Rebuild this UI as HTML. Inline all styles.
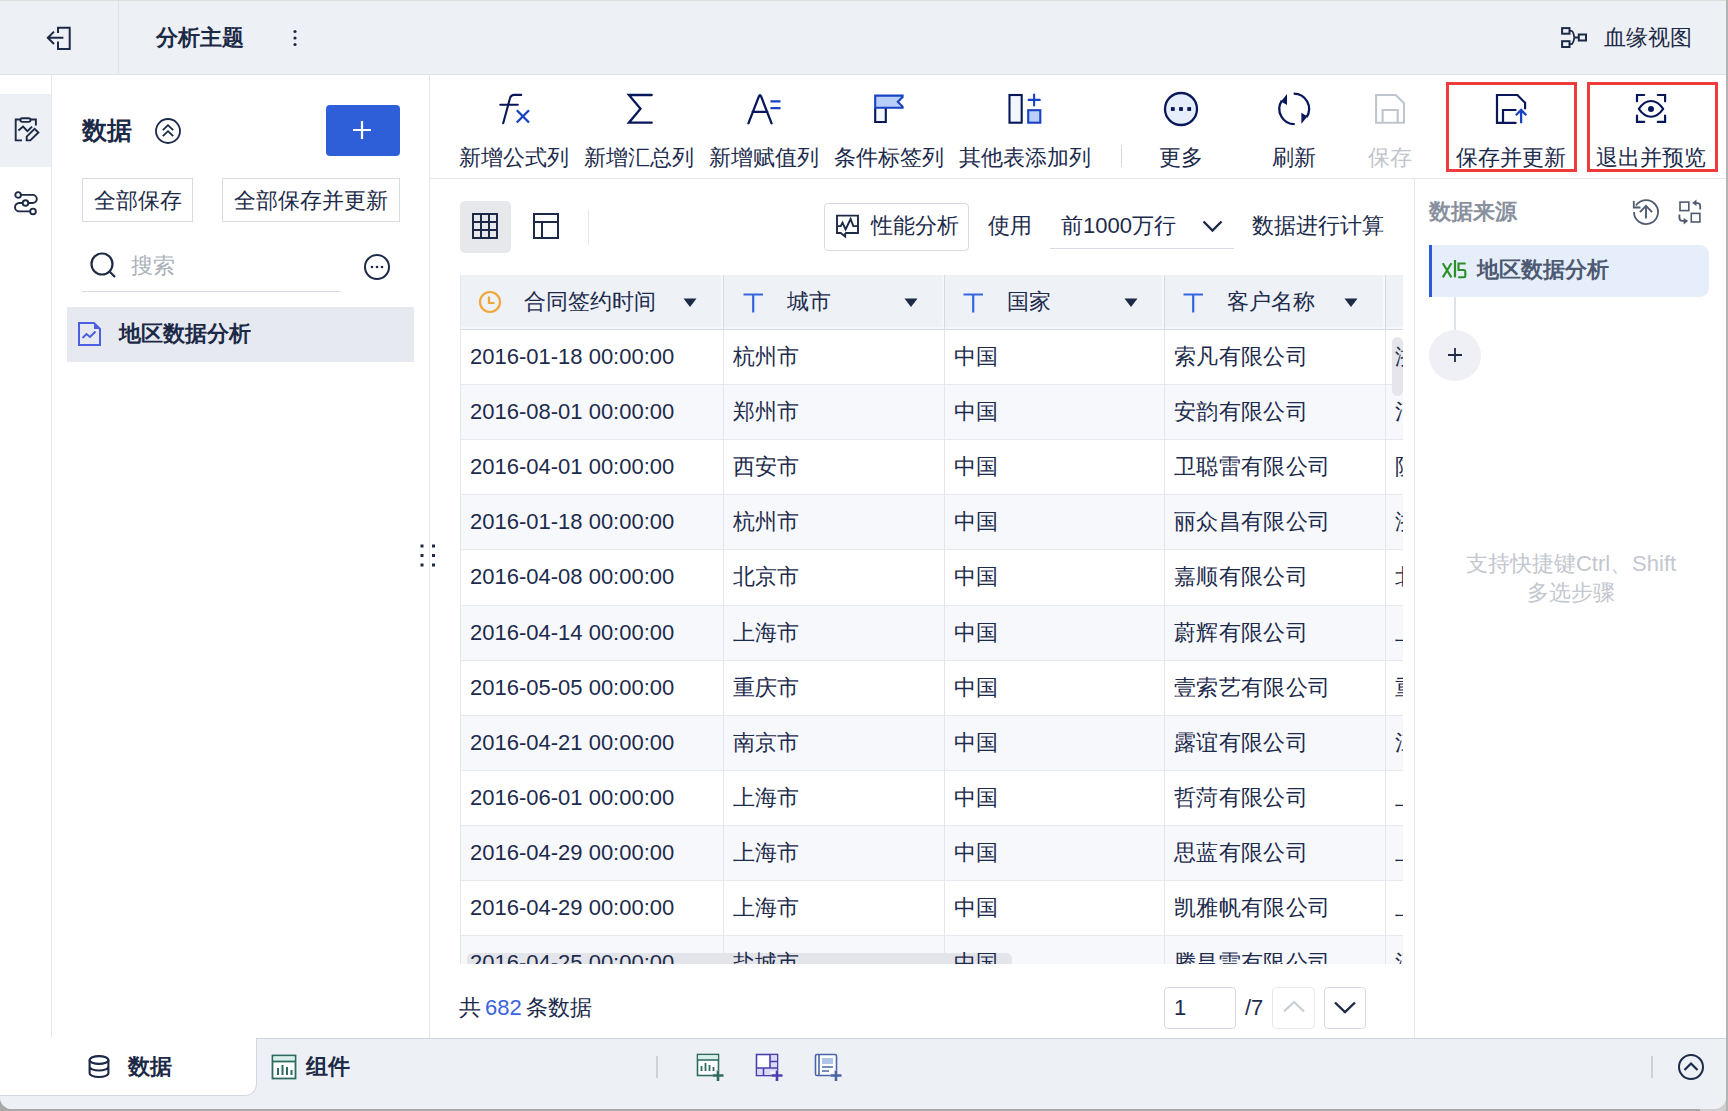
<!DOCTYPE html>
<html><head><meta charset="utf-8"><style>
html,body{margin:0;padding:0}
body{width:1728px;height:1111px;overflow:hidden;position:relative;background:#a8a8a8;font-family:"Liberation Sans",sans-serif}
#win{position:absolute;left:0;top:0;width:1726px;height:1109px;overflow:hidden;border-radius:0 0 12px 12px;background:#edf0f5}
.b{position:absolute}
.t{position:absolute;white-space:nowrap;line-height:26px}
#rc{position:absolute;left:1700px;top:1090px;width:28px;height:21px;background:#cfcfcf}
#rs{position:absolute;left:1726px;top:0;width:2px;height:1111px;background:#b4b4b4}
</style></head><body>
<div id="rc"></div><div id="rs"></div>
<div id="win">
<div class="b" style="left:0px;top:0px;width:1728px;height:1px;background:#dcdedc"></div>
<div class="b" style="left:0px;top:1px;width:1726px;height:73px;background:#edf0f5"></div>
<div class="b" style="left:0px;top:74px;width:1726px;height:1px;background:#dde1e8"></div>
<div class="b" style="left:118px;top:1px;width:1px;height:73px;background:#dde1e8"></div>
<svg class="b" style="left:44px;top:24px" width="30" height="30" viewBox="0 0 30 30" fill="none"><path d="M14 9V3.8H25.7V25H14V17.6" stroke="#1c2a47" stroke-width="2"/><path d="M19.4 13.8H4.2M10 7.6L3.8 13.8L10 20" stroke="#1c2a47" stroke-width="2"/></svg>
<div class="t" style="left:156px;top:25px;font-size:22px;color:#1c2a47;font-weight:bold;">分析主题</div>
<svg class="b" style="left:290px;top:28px" width="10" height="20" viewBox="0 0 10 20" fill="none"><circle cx="5" cy="3.5" r="1.6" fill="#1c2a47"/><circle cx="5" cy="10" r="1.6" fill="#1c2a47"/><circle cx="5" cy="16.5" r="1.6" fill="#1c2a47"/></svg>
<svg class="b" style="left:1558px;top:24px" width="32" height="26" viewBox="0 0 32 26" fill="none"><rect x="4.1" y="4.1" width="7.4" height="5.6" stroke="#1c2a47" stroke-width="2"/><rect x="4.1" y="17.2" width="7.4" height="5.8" stroke="#1c2a47" stroke-width="2"/><rect x="20.8" y="10.5" width="7.2" height="6" stroke="#1c2a47" stroke-width="2"/><path d="M11.5 6.9H13.3C14.8 6.9 15.4 8.2 16.4 13.5C15.4 18.8 14.8 20.1 13.3 20.1H11.5M16.4 13.5H20.8" stroke="#1c2a47" stroke-width="1.8"/></svg>
<div class="t" style="left:1604px;top:25px;font-size:22px;color:#1c2a47;font-weight:normal;">血缘视图</div>
<div class="b" style="left:0px;top:75px;width:51px;height:963px;background:#fff"></div>
<div class="b" style="left:51px;top:75px;width:1px;height:962px;background:#e3e6ec"></div>
<div class="b" style="left:0px;top:94px;width:51px;height:73px;background:#edf0f5"></div>
<svg class="b" style="left:12px;top:115px" width="30" height="30" viewBox="0 0 30 30" fill="none"><path d="M10 25.4H3.7V4.5H8.4M18.5 4.5H23.9V10.5" stroke="#1c2a47" stroke-width="1.9"/><rect x="8.4" y="3.3" width="10.1" height="3.6" rx="1.8" stroke="#1c2a47" stroke-width="1.9"/><path d="M6.4 15.5L11.1 11.6L15.4 16.2L20.1 11.6" stroke="#1c2a47" stroke-width="1.9"/><path d="M14.7 21.6L22.6 13.9L26.4 17.5L18.3 25.4H14.7Z" stroke="#1c2a47" stroke-width="1.9"/></svg>
<svg class="b" style="left:12px;top:189px" width="28" height="28" viewBox="0 0 28 28" fill="none"><circle cx="6.1" cy="5.9" r="2.8" stroke="#1c2a47" stroke-width="1.9"/><circle cx="13.5" cy="14" r="2.8" stroke="#1c2a47" stroke-width="1.9"/><circle cx="21" cy="22.4" r="2.8" stroke="#1c2a47" stroke-width="1.9"/><path d="M8.9 5.9H20.5C22.9 5.9 24.8 7.8 24.8 10C24.8 12.2 22.9 14 20.5 14H16.3M10.7 14H7.2C4.9 14 3 15.9 3 18.2C3 20.5 4.9 22.4 7.2 22.4H18.2" stroke="#1c2a47" stroke-width="1.9"/></svg>
<div class="b" style="left:52px;top:75px;width:377px;height:963px;background:#fff"></div>
<div class="b" style="left:429px;top:75px;width:1px;height:963px;background:#e3e6ec"></div>
<div class="t" style="left:82px;top:117px;font-size:25px;color:#1c2a47;font-weight:bold;">数据</div>
<svg class="b" style="left:154px;top:117px" width="28" height="28" viewBox="0 0 28 28" fill="none"><circle cx="14" cy="14" r="12" stroke="#1c2a47" stroke-width="1.8"/><path d="M8.8 13.2L14 8.2L19.2 13.2M8.8 19.2L14 14.2L19.2 19.2" stroke="#1c2a47" stroke-width="1.8"/></svg>
<div class="b" style="left:326px;top:105px;width:74px;height:51px;background:#2e5fd8;border-radius:4px"></div>
<svg class="b" style="left:352px;top:120px" width="20" height="20" viewBox="0 0 20 20" fill="none"><path d="M10 1V19M1 10H19" stroke="#fff" stroke-width="2.2"/></svg>
<div class="b" style="left:82px;top:178px;width:111px;height:44px;border:1px solid #d6dae2;box-sizing:border-box;background:#fff"></div>
<div class="t" style="left:94px;top:188px;font-size:22px;color:#1c2a47;font-weight:normal;">全部保存</div>
<div class="b" style="left:222px;top:178px;width:178px;height:44px;border:1px solid #d6dae2;box-sizing:border-box;background:#fff"></div>
<div class="t" style="left:234px;top:188px;font-size:22px;color:#1c2a47;font-weight:normal;">全部保存并更新</div>
<svg class="b" style="left:89px;top:251px" width="30" height="30" viewBox="0 0 30 30" fill="none"><circle cx="13" cy="13" r="10.5" stroke="#1c2a47" stroke-width="2.2"/><path d="M20.5 20.5L26 26" stroke="#1c2a47" stroke-width="2.2"/></svg>
<div class="t" style="left:131px;top:253px;font-size:22px;color:#abb0b9;font-weight:normal;">搜索</div>
<div class="b" style="left:82px;top:291px;width:259px;height:1px;background:#d8dce4"></div>
<svg class="b" style="left:363px;top:253px" width="28" height="28" viewBox="0 0 28 28" fill="none"><circle cx="14" cy="14" r="12" stroke="#1c2a47" stroke-width="2"/><circle cx="9" cy="14" r="1.3" fill="#1c2a47"/><circle cx="14" cy="14" r="1.3" fill="#1c2a47"/><circle cx="19" cy="14" r="1.3" fill="#1c2a47"/></svg>
<div class="b" style="left:67px;top:307px;width:347px;height:55px;background:#e6e9f0"></div>
<svg class="b" style="left:76px;top:320px" width="26" height="28" viewBox="0 0 26 28" fill="none"><path d="M3 3H18L24 9V25H3Z" stroke="#4b5fe0" stroke-width="2"/><path d="M18 3V9H24Z" fill="#4b5fe0"/><path d="M6.5 18L10.5 14L14 17L19.5 11.5" stroke="#4b5fe0" stroke-width="2"/></svg>
<div class="t" style="left:119px;top:321px;font-size:22px;color:#1c2a47;font-weight:bold;">地区数据分析</div>
<div class="b" style="left:430px;top:75px;width:1296px;height:103px;background:#fff"></div>
<div class="b" style="left:430px;top:178px;width:1296px;height:1px;background:#e3e6ec"></div>
<svg class="b" style="left:496px;top:90px" width="40" height="38" viewBox="0 0 40 38" fill="none"><path d="M25.2 4.9H18.3C15.6 4.9 14.4 6.5 13.9 8.6L7.2 33.3" stroke="#08175a" stroke-width="2.1" stroke-linecap="round"/><path d="M4.3 14.8H21.8" stroke="#08175a" stroke-width="2.1" stroke-linecap="round"/><path d="M20.8 20.3L33 32.5M33 20.3L20.8 32.5" stroke="#1842c4" stroke-width="2.3"/></svg>
<svg class="b" style="left:624px;top:90px" width="34" height="38" viewBox="0 0 34 38" fill="none"><path d="M27.7 5H4.9L16.5 18.8L4.9 32.7H27.7" stroke="#08175a" stroke-width="2.3" stroke-linecap="round" stroke-linejoin="miter"/></svg>
<svg class="b" style="left:744px;top:90px" width="42" height="38" viewBox="0 0 42 38" fill="none"><path d="M4.4 33.3L15 6.2Q16 4.2 17 6.2L27.6 33.3M8.6 21.8H23.4" stroke="#08175a" stroke-width="2.3" stroke-linecap="round"/><path d="M26.5 11.3H36.5M26.5 18.2H36.5" stroke="#1842c4" stroke-width="2.3"/></svg>
<svg class="b" style="left:872px;top:91px" width="34" height="36" viewBox="0 0 34 36" fill="none"><path d="M3.2 16.8V31H13.8V16.8" stroke="#08175a" stroke-width="2.1" fill="#f2f7fd"/><path d="M3.2 4.6H30.6V6L25.8 10.8L30.6 15.6V16.8H3.2Z" stroke="#1842c4" stroke-width="2.1" fill="#b8cffb"/></svg>
<svg class="b" style="left:1006px;top:91px" width="40" height="36" viewBox="0 0 40 36" fill="none"><rect x="3.5" y="4" width="12.2" height="27.7" stroke="#08175a" stroke-width="2.1" fill="#f2f7fd"/><rect x="22.2" y="19.2" width="12.1" height="12.5" stroke="#1842c4" stroke-width="2.1" fill="#b8cffb"/><path d="M28.1 3.6V14.4M22.6 8.9H33.8" stroke="#1842c4" stroke-width="2.1" stroke-linecap="round"/></svg>
<svg class="b" style="left:1161px;top:90px" width="40" height="40" viewBox="0 0 40 40" fill="none"><circle cx="20" cy="19" r="16" stroke="#08175a" stroke-width="2.3" fill="#e6eefc"/><rect x="9.9" y="17.1" width="3.8" height="3.8" fill="#08175a"/><rect x="18.1" y="17.1" width="3.8" height="3.8" fill="#08175a"/><rect x="26.3" y="17.1" width="3.8" height="3.8" fill="#08175a"/></svg>
<svg class="b" style="left:1274px;top:89px" width="40" height="40" viewBox="0 0 40 40" fill="none"><path d="M19.7 4.6A15.3 15.3 0 0 1 32.6 28.2" stroke="#08175a" stroke-width="2.3"/><path d="M27.4 23.8L27.4 34.8L33.4 27.4Z" fill="#08175a"/><path d="M20.7 35.2A15.3 15.3 0 0 1 7.8 11.6" stroke="#08175a" stroke-width="2.3"/><path d="M13 16L13 5L7 12.4Z" fill="#08175a"/></svg>
<svg class="b" style="left:1372px;top:91px" width="38" height="36" viewBox="0 0 38 36" fill="none"><path d="M4.1 4H23.7L32 12.3V31.7H4.1Z" stroke="#bfc5ce" stroke-width="2.1"/><path d="M10.6 31.7V19H25.7V31.7" stroke="#bfc5ce" stroke-width="2.1"/></svg>
<svg class="b" style="left:1493px;top:91px" width="38" height="36" viewBox="0 0 38 36" fill="none"><path d="M22.6 31.9H4V4H24.4L32.1 11.8V17.5" stroke="#08175a" stroke-width="2.2" stroke-linecap="round"/><path d="M22.6 19H10V31.9" stroke="#08175a" stroke-width="2.2" stroke-linecap="round"/><path d="M28.1 32.3V19.5M22.9 24.2L28.1 19L33.3 24.2" stroke="#1842c4" stroke-width="2.3"/></svg>
<svg class="b" style="left:1633px;top:90px" width="36" height="38" viewBox="0 0 36 38" fill="none"><path d="M4 11.3V5H11.2M24.8 5H32.1V11.3M4 25.5V31.9H11.2M24.8 31.9H32.1V25.5" stroke="#08175a" stroke-width="2.2" stroke-linecap="round"/><path d="M5.8 18.9C9.5 13.5 13 11 18 11C23 11 26.5 13.5 30.2 18.9C26.5 24.2 23 26.8 18 26.8C13 26.8 9.5 24.2 5.8 18.9Z" stroke="#08175a" stroke-width="2.1" stroke-linejoin="round"/><circle cx="18" cy="18.9" r="3" fill="#08175a"/></svg>
<div class="t" style="left:459px;top:145px;font-size:22px;color:#1c2b4c;font-weight:normal;">新增公式列</div>
<div class="t" style="left:584px;top:145px;font-size:22px;color:#1c2b4c;font-weight:normal;">新增汇总列</div>
<div class="t" style="left:709px;top:145px;font-size:22px;color:#1c2b4c;font-weight:normal;">新增赋值列</div>
<div class="t" style="left:834px;top:145px;font-size:22px;color:#1c2b4c;font-weight:normal;">条件标签列</div>
<div class="t" style="left:959px;top:145px;font-size:22px;color:#1c2b4c;font-weight:normal;">其他表添加列</div>
<div class="t" style="left:1159px;top:145px;font-size:22px;color:#1c2b4c;font-weight:normal;">更多</div>
<div class="t" style="left:1272px;top:145px;font-size:22px;color:#1c2b4c;font-weight:normal;">刷新</div>
<div class="t" style="left:1368px;top:145px;font-size:22px;color:#c0c4cc;font-weight:normal;">保存</div>
<div class="t" style="left:1456px;top:145px;font-size:22px;color:#1c2b4c;font-weight:normal;">保存并更新</div>
<div class="t" style="left:1596px;top:145px;font-size:22px;color:#1c2b4c;font-weight:normal;">退出并预览</div>
<div class="b" style="left:1121px;top:145px;width:1px;height:22px;background:#d3d7de"></div>
<div class="b" style="left:1446px;top:82px;width:131px;height:90px;border:3px solid #ee3b3b;box-sizing:border-box"></div>
<div class="b" style="left:1587px;top:82px;width:131px;height:90px;border:3px solid #ee3b3b;box-sizing:border-box"></div>
<div class="b" style="left:430px;top:179px;width:984px;height:859px;background:#fff"></div>
<div class="b" style="left:1414px;top:179px;width:1px;height:859px;background:#e3e6ec"></div>
<div class="b" style="left:460px;top:201px;width:51px;height:52px;background:#e6e8ec;border-radius:5px"></div>
<svg class="b" style="left:470px;top:211px" width="30" height="30" viewBox="0 0 30 30" fill="none"><rect x="3" y="3" width="24" height="24" stroke="#1c2a47" stroke-width="2"/><path d="M11 3V27M19 3V27M3 11H27M3 19H27" stroke="#1c2a47" stroke-width="2"/></svg>
<svg class="b" style="left:531px;top:211px" width="30" height="30" viewBox="0 0 30 30" fill="none"><rect x="3" y="3" width="24" height="24" stroke="#1c2a47" stroke-width="2"/><path d="M3 11H27M11 11V27" stroke="#1c2a47" stroke-width="2"/></svg>
<div class="b" style="left:588px;top:210px;width:1px;height:35px;background:#e3e6ec"></div>
<div class="b" style="left:824px;top:203px;width:145px;height:48px;border:1px solid #d6dae2;box-sizing:border-box;border-radius:4px"></div>
<svg class="b" style="left:833px;top:212px" width="30" height="30" viewBox="0 0 30 30" fill="none"><path d="M12.2 21H25V3.6H4V21H7.7L12.2 24.5V21" stroke="#1c2a47" stroke-width="1.9"/><path d="M4 14.1H7.7L9.5 10.6L12.6 17.4L17.6 7L20.3 14.1H25" stroke="#1c2a47" stroke-width="1.9"/></svg>
<div class="t" style="left:871px;top:213px;font-size:22px;color:#1c2b4c;font-weight:normal;">性能分析</div>
<div class="t" style="left:988px;top:213px;font-size:22px;color:#1c2b4c;font-weight:normal;">使用</div>
<div class="t" style="left:1061px;top:213px;font-size:22px;color:#1c2b4c;font-weight:normal;">前1000万行</div>
<svg class="b" style="left:1200px;top:216px" width="26" height="20" viewBox="0 0 26 20" fill="none"><path d="M3.5 5.5L12.5 14.5L21.5 5.5" stroke="#1c2a47" stroke-width="2.4"/></svg>
<div class="b" style="left:1050px;top:248px;width:184px;height:1px;background:#d8dce4"></div>
<div class="t" style="left:1252px;top:213px;font-size:22px;color:#1c2b4c;font-weight:normal;">数据进行计算</div>
<div class="b" style="left:460px;top:275px;width:943px;height:689px;overflow:hidden"><div class="b" style="left:0px;top:0px;width:943px;height:54px;background:#eef1f6"></div><div class="b" style="left:0px;top:52px;width:943px;height:2px;background:#f6f7fa"></div><div class="b" style="left:0px;top:54px;width:943px;height:1px;background:#d5dbe4"></div><div class="b" style="left:0px;top:109px;width:943px;height:1px;background:#e6e9ef"></div><div class="b" style="left:0px;top:110px;width:943px;height:55px;background:#f7f8fc"></div><div class="b" style="left:0px;top:164px;width:943px;height:1px;background:#e6e9ef"></div><div class="b" style="left:0px;top:219px;width:943px;height:1px;background:#e6e9ef"></div><div class="b" style="left:0px;top:220px;width:943px;height:55px;background:#f7f8fc"></div><div class="b" style="left:0px;top:274px;width:943px;height:1px;background:#e6e9ef"></div><div class="b" style="left:0px;top:330px;width:943px;height:1px;background:#e6e9ef"></div><div class="b" style="left:0px;top:331px;width:943px;height:55px;background:#f7f8fc"></div><div class="b" style="left:0px;top:385px;width:943px;height:1px;background:#e6e9ef"></div><div class="b" style="left:0px;top:440px;width:943px;height:1px;background:#e6e9ef"></div><div class="b" style="left:0px;top:441px;width:943px;height:55px;background:#f7f8fc"></div><div class="b" style="left:0px;top:495px;width:943px;height:1px;background:#e6e9ef"></div><div class="b" style="left:0px;top:550px;width:943px;height:1px;background:#e6e9ef"></div><div class="b" style="left:0px;top:551px;width:943px;height:55px;background:#f7f8fc"></div><div class="b" style="left:0px;top:605px;width:943px;height:1px;background:#e6e9ef"></div><div class="b" style="left:0px;top:660px;width:943px;height:1px;background:#e6e9ef"></div><div class="b" style="left:0px;top:661px;width:943px;height:55px;background:#f7f8fc"></div><div class="b" style="left:0px;top:715px;width:943px;height:1px;background:#e6e9ef"></div><div class="b" style="left:0px;top:0px;width:1px;height:689px;background:#e3e6ec"></div><div class="b" style="left:263px;top:0px;width:1px;height:689px;background:#e3e6ec"></div><div class="b" style="left:484px;top:0px;width:1px;height:689px;background:#e3e6ec"></div><div class="b" style="left:704px;top:0px;width:1px;height:689px;background:#e3e6ec"></div><div class="b" style="left:925px;top:0px;width:1px;height:689px;background:#e3e6ec"></div><div class="b" style="left:261px;top:0px;width:2px;height:54px;background:#f6f7fa"></div><div class="b" style="left:263px;top:0px;width:1px;height:54px;background:#d5dbe4"></div><div class="b" style="left:482px;top:0px;width:2px;height:54px;background:#f6f7fa"></div><div class="b" style="left:484px;top:0px;width:1px;height:54px;background:#d5dbe4"></div><div class="b" style="left:702px;top:0px;width:2px;height:54px;background:#f6f7fa"></div><div class="b" style="left:704px;top:0px;width:1px;height:54px;background:#d5dbe4"></div><div class="b" style="left:923px;top:0px;width:2px;height:54px;background:#f6f7fa"></div><div class="b" style="left:925px;top:0px;width:1px;height:54px;background:#d5dbe4"></div><div class="b" style="left:932px;top:62px;width:11px;height:59px;background:#e4e6eb;border-radius:6px"></div><div class="b" style="left:7px;top:678px;width:545px;height:22px;background:#e3e5ea;border-radius:6px"></div><svg class="b" style="left:17px;top:14px" width="26" height="26" viewBox="0 0 26 26" fill="none"><circle cx="13" cy="13" r="10" stroke="#f0a73a" stroke-width="2.2"/><path d="M12 7.5V14H17.5" stroke="#f0a73a" stroke-width="2.2"/></svg><div class="t" style="left:64px;top:14px;font-size:22px;color:#1c2b4c;font-weight:normal;">合同签约时间</div><svg class="b" style="left:223px;top:23px" width="14" height="10" viewBox="0 0 14 10" fill="none"><path d="M0.5 0.5H13.5L7 9Z" fill="#1c2a47"/></svg><svg class="b" style="left:281px;top:16px" width="26" height="26" viewBox="0 0 26 26" fill="none"><path d="M2.5 3.5H22M12.2 3.5V21.5" stroke="#3566e0" stroke-width="2.2"/></svg><div class="t" style="left:327px;top:14px;font-size:22px;color:#1c2b4c;font-weight:normal;">城市</div><svg class="b" style="left:444px;top:23px" width="14" height="10" viewBox="0 0 14 10" fill="none"><path d="M0.5 0.5H13.5L7 9Z" fill="#1c2a47"/></svg><svg class="b" style="left:501px;top:16px" width="26" height="26" viewBox="0 0 26 26" fill="none"><path d="M2.5 3.5H22M12.2 3.5V21.5" stroke="#3566e0" stroke-width="2.2"/></svg><div class="t" style="left:547px;top:14px;font-size:22px;color:#1c2b4c;font-weight:normal;">国家</div><svg class="b" style="left:664px;top:23px" width="14" height="10" viewBox="0 0 14 10" fill="none"><path d="M0.5 0.5H13.5L7 9Z" fill="#1c2a47"/></svg><svg class="b" style="left:721px;top:16px" width="26" height="26" viewBox="0 0 26 26" fill="none"><path d="M2.5 3.5H22M12.2 3.5V21.5" stroke="#3566e0" stroke-width="2.2"/></svg><div class="t" style="left:767px;top:14px;font-size:22px;color:#1c2b4c;font-weight:normal;">客户名称</div><svg class="b" style="left:884px;top:23px" width="14" height="10" viewBox="0 0 14 10" fill="none"><path d="M0.5 0.5H13.5L7 9Z" fill="#1c2a47"/></svg><div class="t" style="left:10px;top:69px;font-size:22px;color:#1c2b4c;font-weight:normal;">2016-01-18 00:00:00</div><div class="t" style="left:273px;top:69px;font-size:22px;color:#1c2b4c;font-weight:normal;">杭州市</div><div class="t" style="left:494px;top:69px;font-size:22px;color:#1c2b4c;font-weight:normal;">中国</div><div class="t" style="left:714px;top:69px;font-size:22px;color:#1c2b4c;font-weight:normal;letter-spacing:0.35px">索凡有限公司</div><div class="t" style="left:935px;top:69px;font-size:22px;color:#1c2b4c;font-weight:normal;">浙</div><div class="t" style="left:10px;top:124px;font-size:22px;color:#1c2b4c;font-weight:normal;">2016-08-01 00:00:00</div><div class="t" style="left:273px;top:124px;font-size:22px;color:#1c2b4c;font-weight:normal;">郑州市</div><div class="t" style="left:494px;top:124px;font-size:22px;color:#1c2b4c;font-weight:normal;">中国</div><div class="t" style="left:714px;top:124px;font-size:22px;color:#1c2b4c;font-weight:normal;letter-spacing:0.35px">安韵有限公司</div><div class="t" style="left:935px;top:124px;font-size:22px;color:#1c2b4c;font-weight:normal;">河</div><div class="t" style="left:10px;top:179px;font-size:22px;color:#1c2b4c;font-weight:normal;">2016-04-01 00:00:00</div><div class="t" style="left:273px;top:179px;font-size:22px;color:#1c2b4c;font-weight:normal;">西安市</div><div class="t" style="left:494px;top:179px;font-size:22px;color:#1c2b4c;font-weight:normal;">中国</div><div class="t" style="left:714px;top:179px;font-size:22px;color:#1c2b4c;font-weight:normal;letter-spacing:0.35px">卫聪雷有限公司</div><div class="t" style="left:935px;top:179px;font-size:22px;color:#1c2b4c;font-weight:normal;">陕</div><div class="t" style="left:10px;top:234px;font-size:22px;color:#1c2b4c;font-weight:normal;">2016-01-18 00:00:00</div><div class="t" style="left:273px;top:234px;font-size:22px;color:#1c2b4c;font-weight:normal;">杭州市</div><div class="t" style="left:494px;top:234px;font-size:22px;color:#1c2b4c;font-weight:normal;">中国</div><div class="t" style="left:714px;top:234px;font-size:22px;color:#1c2b4c;font-weight:normal;letter-spacing:0.35px">丽众昌有限公司</div><div class="t" style="left:935px;top:234px;font-size:22px;color:#1c2b4c;font-weight:normal;">浙</div><div class="t" style="left:10px;top:289px;font-size:22px;color:#1c2b4c;font-weight:normal;">2016-04-08 00:00:00</div><div class="t" style="left:273px;top:289px;font-size:22px;color:#1c2b4c;font-weight:normal;">北京市</div><div class="t" style="left:494px;top:289px;font-size:22px;color:#1c2b4c;font-weight:normal;">中国</div><div class="t" style="left:714px;top:289px;font-size:22px;color:#1c2b4c;font-weight:normal;letter-spacing:0.35px">嘉顺有限公司</div><div class="t" style="left:935px;top:289px;font-size:22px;color:#1c2b4c;font-weight:normal;">北</div><div class="t" style="left:10px;top:345px;font-size:22px;color:#1c2b4c;font-weight:normal;">2016-04-14 00:00:00</div><div class="t" style="left:273px;top:345px;font-size:22px;color:#1c2b4c;font-weight:normal;">上海市</div><div class="t" style="left:494px;top:345px;font-size:22px;color:#1c2b4c;font-weight:normal;">中国</div><div class="t" style="left:714px;top:345px;font-size:22px;color:#1c2b4c;font-weight:normal;letter-spacing:0.35px">蔚辉有限公司</div><div class="t" style="left:935px;top:345px;font-size:22px;color:#1c2b4c;font-weight:normal;">上</div><div class="t" style="left:10px;top:400px;font-size:22px;color:#1c2b4c;font-weight:normal;">2016-05-05 00:00:00</div><div class="t" style="left:273px;top:400px;font-size:22px;color:#1c2b4c;font-weight:normal;">重庆市</div><div class="t" style="left:494px;top:400px;font-size:22px;color:#1c2b4c;font-weight:normal;">中国</div><div class="t" style="left:714px;top:400px;font-size:22px;color:#1c2b4c;font-weight:normal;letter-spacing:0.35px">壹索艺有限公司</div><div class="t" style="left:935px;top:400px;font-size:22px;color:#1c2b4c;font-weight:normal;">重</div><div class="t" style="left:10px;top:455px;font-size:22px;color:#1c2b4c;font-weight:normal;">2016-04-21 00:00:00</div><div class="t" style="left:273px;top:455px;font-size:22px;color:#1c2b4c;font-weight:normal;">南京市</div><div class="t" style="left:494px;top:455px;font-size:22px;color:#1c2b4c;font-weight:normal;">中国</div><div class="t" style="left:714px;top:455px;font-size:22px;color:#1c2b4c;font-weight:normal;letter-spacing:0.35px">露谊有限公司</div><div class="t" style="left:935px;top:455px;font-size:22px;color:#1c2b4c;font-weight:normal;">江</div><div class="t" style="left:10px;top:510px;font-size:22px;color:#1c2b4c;font-weight:normal;">2016-06-01 00:00:00</div><div class="t" style="left:273px;top:510px;font-size:22px;color:#1c2b4c;font-weight:normal;">上海市</div><div class="t" style="left:494px;top:510px;font-size:22px;color:#1c2b4c;font-weight:normal;">中国</div><div class="t" style="left:714px;top:510px;font-size:22px;color:#1c2b4c;font-weight:normal;letter-spacing:0.35px">哲菏有限公司</div><div class="t" style="left:935px;top:510px;font-size:22px;color:#1c2b4c;font-weight:normal;">上</div><div class="t" style="left:10px;top:565px;font-size:22px;color:#1c2b4c;font-weight:normal;">2016-04-29 00:00:00</div><div class="t" style="left:273px;top:565px;font-size:22px;color:#1c2b4c;font-weight:normal;">上海市</div><div class="t" style="left:494px;top:565px;font-size:22px;color:#1c2b4c;font-weight:normal;">中国</div><div class="t" style="left:714px;top:565px;font-size:22px;color:#1c2b4c;font-weight:normal;letter-spacing:0.35px">思蓝有限公司</div><div class="t" style="left:935px;top:565px;font-size:22px;color:#1c2b4c;font-weight:normal;">上</div><div class="t" style="left:10px;top:620px;font-size:22px;color:#1c2b4c;font-weight:normal;">2016-04-29 00:00:00</div><div class="t" style="left:273px;top:620px;font-size:22px;color:#1c2b4c;font-weight:normal;">上海市</div><div class="t" style="left:494px;top:620px;font-size:22px;color:#1c2b4c;font-weight:normal;">中国</div><div class="t" style="left:714px;top:620px;font-size:22px;color:#1c2b4c;font-weight:normal;letter-spacing:0.35px">凯雅帆有限公司</div><div class="t" style="left:935px;top:620px;font-size:22px;color:#1c2b4c;font-weight:normal;">上</div><div class="t" style="left:10px;top:675px;font-size:22px;color:#1c2b4c;font-weight:normal;">2016-04-25 00:00:00</div><div class="t" style="left:273px;top:675px;font-size:22px;color:#1c2b4c;font-weight:normal;">盐城市</div><div class="t" style="left:494px;top:675px;font-size:22px;color:#1c2b4c;font-weight:normal;">中国</div><div class="t" style="left:714px;top:675px;font-size:22px;color:#1c2b4c;font-weight:normal;letter-spacing:0.35px">腾昌雷有限公司</div><div class="t" style="left:935px;top:675px;font-size:22px;color:#1c2b4c;font-weight:normal;">江</div></div>
<div class="t" style="left:459px;top:995px;font-size:22px;color:#1c2b4c;font-weight:normal;">共<span style="color:#3a63e0;margin:0 4px">682</span>条数据</div>
<div class="b" style="left:1164px;top:987px;width:72px;height:42px;border:1px solid #d6dae2;box-sizing:border-box;border-radius:4px"></div>
<div class="t" style="left:1174px;top:995px;font-size:22px;color:#1c2b4c;font-weight:normal;">1</div>
<div class="t" style="left:1245px;top:995px;font-size:22px;color:#1c2b4c;font-weight:normal;">/7</div>
<div class="b" style="left:1272px;top:987px;width:43px;height:42px;border:1px solid #e8eaef;box-sizing:border-box;border-radius:4px"></div>
<svg class="b" style="left:1280px;top:996px" width="28" height="22" viewBox="0 0 28 22" fill="none"><path d="M4 15.5L14 6L24 15.5" stroke="#c9cfd8" stroke-width="2.2"/></svg>
<div class="b" style="left:1324px;top:987px;width:42px;height:42px;border:1px solid #d6dae2;box-sizing:border-box;border-radius:4px"></div>
<svg class="b" style="left:1331px;top:996px" width="28" height="22" viewBox="0 0 28 22" fill="none"><path d="M4 6.5L14 16L24 6.5" stroke="#1c2a47" stroke-width="2.4"/></svg>
<div class="b" style="left:1415px;top:179px;width:311px;height:859px;background:#fff"></div>
<div class="t" style="left:1429px;top:199px;font-size:22px;color:#8a919e;font-weight:bold;">数据来源</div>
<svg class="b" style="left:1630px;top:197px" width="32" height="30" viewBox="0 0 32 30" fill="none"><path d="M4 15A12 12 0 1 0 5.9 8.6" stroke="#4f5b70" stroke-width="1.8"/><path d="M3.8 4V10.5H10.5" stroke="#4f5b70" stroke-width="1.8"/><path d="M16 21.6V8.8M9.9 15.2L16 8.8L22.1 15.2" stroke="#4f5b70" stroke-width="1.9"/></svg>
<svg class="b" style="left:1676px;top:197px" width="30" height="30" viewBox="0 0 30 30" fill="none"><rect x="4" y="5.1" width="8.8" height="8.5" stroke="#4f5b70" stroke-width="1.6"/><rect x="15.3" y="16.4" width="8.6" height="8.6" stroke="#4f5b70" stroke-width="1.6"/><path d="M24.2 12.4V9C24.2 7.4 23 6.1 21.4 6.1H19" stroke="#4f5b70" stroke-width="1.8"/><path d="M16.1 6.1L20.5 2.4V9.1Z" fill="#4f5b70"/><path d="M3.4 17.4V20.5C3.4 22.4 4.6 23.9 6.5 23.9H8.6" stroke="#4f5b70" stroke-width="1.8"/><path d="M12.2 23.9L7.6 20.9V27.4Z" fill="#4f5b70"/></svg>
<div class="b" style="left:1429px;top:245px;width:280px;height:52px;background:#e6eefc;border-radius:0 9px 9px 0"></div>
<div class="b" style="left:1429px;top:245px;width:3px;height:52px;background:#2d5bd7"></div>
<svg class="b" style="left:1438px;top:257px" width="32" height="24" viewBox="0 0 32 24" fill="none"><path d="M4.8 6.2L13.4 20.4M13.4 6.2L4.8 20.4" stroke="#2a8f24" stroke-width="2.1"/><path d="M17 3V20.4" stroke="#2a8f24" stroke-width="2.2"/><path d="M27.7 6.5H20.5V13H26C27 13 27.3 13.5 27.3 14.5V19C27.3 19.8 27 20.2 26.2 20.2H20.2" stroke="#2a8f24" stroke-width="2.1"/></svg>
<div class="t" style="left:1477px;top:257px;font-size:22px;color:#4d5a71;font-weight:bold;">地区数据分析</div>
<div class="b" style="left:1454px;top:297px;width:2px;height:33px;background:#dfe2e8"></div>
<div class="b" style="left:1429px;top:330px;width:52px;height:51px;background:#eef0f5;border-radius:50%"></div>
<svg class="b" style="left:1445px;top:345px" width="20" height="20" viewBox="0 0 20 20" fill="none"><path d="M10 3V17M3 10H17" stroke="#1c2a47" stroke-width="1.8"/></svg>
<div class="t" style="left:1420px;top:549px;width:302px;text-align:center;font-size:22px;line-height:29px;color:#c3c7cf">支持快捷键Ctrl、Shift<br>多选步骤</div>
<div class="b" style="left:0px;top:1038px;width:1726px;height:71px;background:#edf0f5"></div>
<div class="b" style="left:256px;top:1038px;width:1470px;height:1px;background:#d3d8e0"></div>
<div class="b" style="left:0px;top:1038px;width:257px;height:58px;background:#fff;border-right:1px solid #d3d8e0;border-bottom:1px solid #d3d8e0;border-bottom-right-radius:12px;box-sizing:border-box"></div>
<svg class="b" style="left:86px;top:1053px" width="26" height="28" viewBox="0 0 26 28" fill="none"><ellipse cx="13" cy="7" rx="9.4" ry="3.9" stroke="#1c2a47" stroke-width="2.1"/><path d="M3.6 7V20C3.6 22.3 7.6 24 13 24C18.4 24 22.4 22.3 22.4 20V7M3.6 13.5C3.6 15.8 7.6 17.5 13 17.5C18.4 17.5 22.4 15.8 22.4 13.5" stroke="#1c2a47" stroke-width="2.1"/></svg>
<div class="t" style="left:128px;top:1054px;font-size:22px;color:#1c2a47;font-weight:bold;">数据</div>
<svg class="b" style="left:270px;top:1053px" width="28" height="28" viewBox="0 0 28 28" fill="none"><rect x="2.5" y="2.5" width="23" height="23" stroke="#2f6b60" stroke-width="1.8" fill="#fff"/><rect x="3.5" y="3.5" width="21" height="5" fill="#d8efea"/><path d="M2.5 8.5H25.5" stroke="#2f6b60" stroke-width="1.8"/><path d="M8 15V22M12.5 12V22M17 14V22M21.5 17V22" stroke="#2f6b60" stroke-width="2"/></svg>
<div class="t" style="left:306px;top:1054px;font-size:22px;color:#1c2a47;font-weight:bold;">组件</div>
<div class="b" style="left:656px;top:1056px;width:2px;height:22px;background:#cdd1da"></div>
<svg class="b" style="left:695px;top:1052px" width="32" height="32" viewBox="0 0 32 32" fill="none"><rect x="2.5" y="2.5" width="21" height="21" stroke="#2f6b60" stroke-width="1.6" fill="#fff"/><rect x="3.3" y="3.3" width="19.4" height="4.2" fill="#d8efea"/><path d="M2.5 8H23.5" stroke="#2f6b60" stroke-width="1.6"/><path d="M6.5 14V19M10.5 11V19M14.5 13V19M18.5 15V19" stroke="#2f6b60" stroke-width="1.8"/><path d="M23 18.5V29M17.5 23.5H28.5" stroke="#edf0f5" stroke-width="5.5"/><path d="M23 18.5V29M17.5 23.5H28.5" stroke="#2f6b60" stroke-width="2.6"/></svg>
<svg class="b" style="left:754px;top:1052px" width="32" height="32" viewBox="0 0 32 32" fill="none"><rect x="2.5" y="2.5" width="21" height="21" stroke="#4a3fae" stroke-width="1.6" fill="#fff"/><rect x="16" y="3.5" width="7" height="16" fill="#dcd9f5"/><rect x="3.5" y="16" width="13" height="7" fill="#dcd9f5"/><path d="M16 2.5V16H2.5M16 9.5H23.5M16 16H23.5M9.5 16V23.5" stroke="#4a3fae" stroke-width="1.6"/><path d="M23 18.5V29M17.5 23.5H28.5" stroke="#edf0f5" stroke-width="5.5"/><path d="M23 18.5V29M17.5 23.5H28.5" stroke="#4a3fae" stroke-width="2.6"/></svg>
<svg class="b" style="left:813px;top:1052px" width="32" height="32" viewBox="0 0 32 32" fill="none"><rect x="2.5" y="2.5" width="21" height="21" rx="1.5" stroke="#4a64a6" stroke-width="1.6" fill="#fff"/><path d="M6 2.5V23.5" stroke="#4a64a6" stroke-width="1.6"/><rect x="9" y="6" width="11" height="6" fill="#aec4e8"/><path d="M9 15H20M9 19H16" stroke="#4a64a6" stroke-width="1.6"/><path d="M23 18.5V29M17.5 23.5H28.5" stroke="#edf0f5" stroke-width="5.5"/><path d="M23 18.5V29M17.5 23.5H28.5" stroke="#4a64a6" stroke-width="2.6"/></svg>
<div class="b" style="left:1651px;top:1056px;width:2px;height:22px;background:#cdd1da"></div>
<svg class="b" style="left:1677px;top:1053px" width="28" height="28" viewBox="0 0 28 28" fill="none"><circle cx="14" cy="14" r="12" stroke="#1c2a47" stroke-width="2"/><path d="M7.5 17L14 10.5L20.5 17" stroke="#1c2a47" stroke-width="2.2"/></svg>
<svg class="b" style="left:418px;top:542px" width="20" height="28" viewBox="0 0 20 28" fill="none"><rect x="2.5" y="2.5" width="3" height="3" fill="#1c2a47"/><rect x="14" y="2.5" width="3" height="3" fill="#1c2a47"/><rect x="2.5" y="12" width="3" height="3" fill="#1c2a47"/><rect x="14" y="12" width="3" height="3" fill="#1c2a47"/><rect x="2.5" y="21.5" width="3" height="3" fill="#1c2a47"/><rect x="14" y="21.5" width="3" height="3" fill="#1c2a47"/></svg>
</div>
</body></html>
